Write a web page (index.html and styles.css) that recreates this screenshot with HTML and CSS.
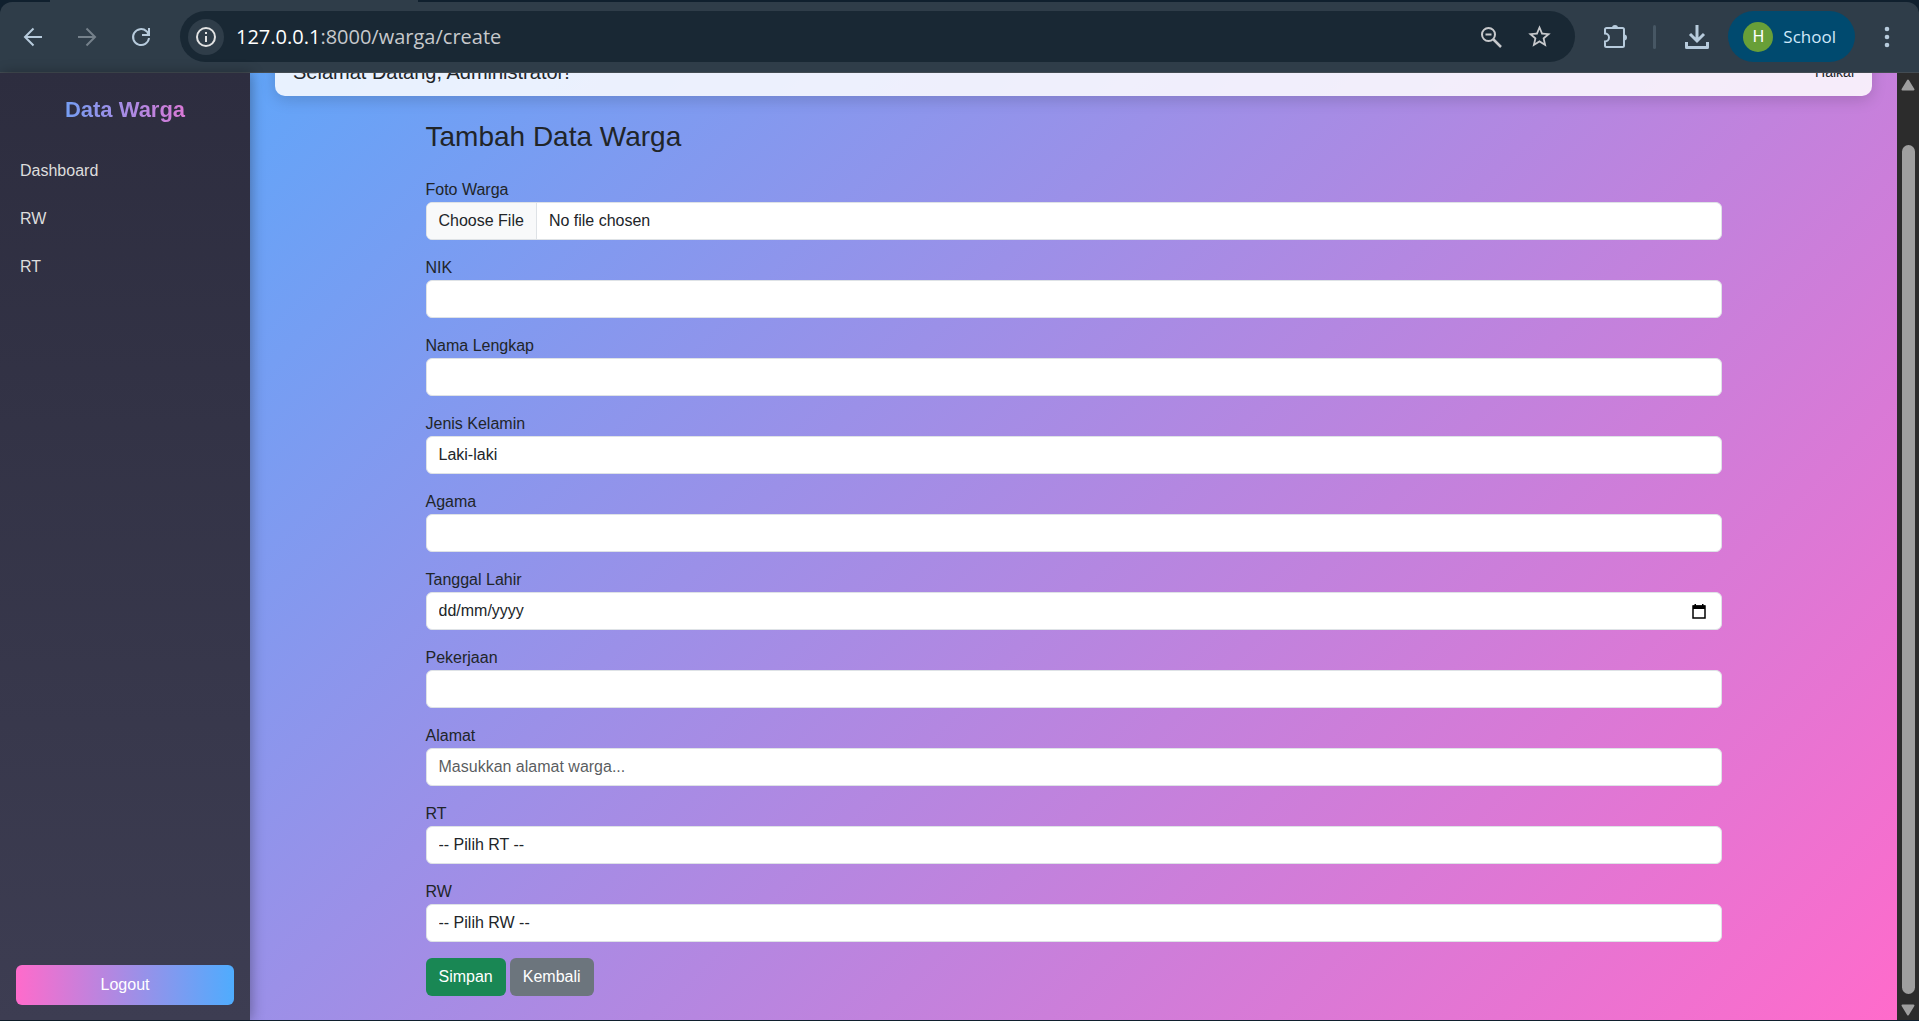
FILE: index.html
```html
<!DOCTYPE html>
<html lang="id">
<head>
<meta charset="utf-8">
<title>Tambah Data Warga</title>
<meta name="viewport" content="width=device-width, initial-scale=1">
<link rel="stylesheet" href="styles.css">
</head>
<body>
<header class="browser">
  <div class="toolbar">
    <div class="nav-buttons">
      <button class="icon-button" aria-label="Back"><svg width="24" height="24" viewBox="0 0 24 24"><path d="M21 12H4M12.500 3.500L4 12l8.500 8.500" fill="none" stroke="currentColor" stroke-width="2"/></svg></button>
      <button class="icon-button muted" aria-label="Forward" disabled><svg width="24" height="24" viewBox="0 0 24 24"><path d="M3 12h17M11.500 3.500L20 12l-8.500 8.500" fill="none" stroke="currentColor" stroke-width="2"/></svg></button>
      <button class="icon-button" aria-label="Reload"><svg width="24" height="24" viewBox="0 0 24 24"><path d="M20 13a8 8 0 1 1-2.500-6.800L20 9" fill="none" stroke="currentColor" stroke-width="2"/><path d="M21 3v8h-8v-2h4.500L19 7V3z" fill="currentColor"/></svg></button>
    </div>
    <div class="address">
      <button class="site-info" aria-label="Site information"><svg width="24" height="24" viewBox="0 0 24 24"><circle cx="12" cy="12" r="9" fill="none" stroke="currentColor" stroke-width="2"/><path d="M12 11v6M12 7v2" stroke="currentColor" stroke-width="2"/></svg></button>
      <span class="url"><span class="host">127.0.0.1</span>:8000/warga/create</span>
      <button class="icon-button light" aria-label="Zoom"><svg width="24" height="24" viewBox="0 0 24 24"><circle cx="9.500" cy="9.500" r="6.500" fill="none" stroke="currentColor" stroke-width="2"/><path d="M14 14l8 8" stroke="currentColor" stroke-width="2.500"/><path d="M6.500 9.500h6" stroke="currentColor" stroke-width="2"/></svg></button>
      <button class="icon-button light" aria-label="Bookmark"><svg width="27" height="27" viewBox="0 0 24 24" fill="currentColor"><path d="M22 9.240l-7.190-.62L12 2 9.190 8.630 2 9.240l5.460 4.730L5.820 21 12 17.270 18.180 21l-1.630-7.030L22 9.240zM12 15.400l-3.760 2.270 1-4.280-3.320-2.880 4.380-.38L12 6.100l1.710 4.040 4.380.38-3.320 2.880 1 4.280L12 15.400z"/></svg></button>
    </div>
    <div class="actions">
      <button class="icon-button" aria-label="Extensions"><svg width="28" height="28" viewBox="0 0 28 28"><path d="M4.500 5h16a1.500 1.500 0 0 1 1.500 1.500v16a1.500 1.500 0 0 1-1.500 1.500h-16A1.500 1.500 0 0 1 3 22.500v-4a4 4 0 0 0 0-8v-4A1.500 1.500 0 0 1 4.500 5z" fill="none" stroke="currentColor" stroke-width="2"/><path d="M10 5a3 3 0 0 1 6 0zM22 11.500a3 3 0 0 1 0 6z" fill="currentColor"/></svg></button>
      <span class="divider"></span>
      <button class="icon-button" aria-label="Downloads"><svg width="26" height="26" viewBox="0 0 26 26"><path d="M13 1v15M6 10l7 7 7-7" fill="none" stroke="currentColor" stroke-width="3"/><path d="M2.500 18v5.500h21V18" fill="none" stroke="currentColor" stroke-width="3" stroke-linejoin="round"/></svg></button>
      <button class="profile"><span class="avatar">H</span>School</button>
      <button class="icon-button" aria-label="Menu"><svg width="24" height="24" viewBox="0 0 24 24" fill="currentColor"><circle cx="12" cy="4" r="2.300"/><circle cx="12" cy="12" r="2.300"/><circle cx="12" cy="20" r="2.300"/></svg></button>
    </div>
  </div>
</header>

<div class="viewport">
  <div class="page">
    <aside class="sidebar">
      <h4 class="brand">Data Warga</h4>
      <nav class="menu">
        <a href="#">Dashboard</a>
        <a href="#">RW</a>
        <a href="#">RT</a>
      </nav>
      <button class="logout">Logout</button>
    </aside>
    <main class="content">
      <div class="welcome">
        <span class="greeting">Selamat Datang, Administrator!</span>
        <span class="user">Haikal</span>
      </div>
      <form class="container">
        <h3 class="title">Tambah Data Warga</h3>
        <div class="field"><label for="foto">Foto Warga</label><input class="control" type="file" id="foto"></div>
        <div class="field"><label for="nik">NIK</label><input class="control" type="text" id="nik"></div>
        <div class="field"><label for="nama">Nama Lengkap</label><input class="control" type="text" id="nama"></div>
        <div class="field"><label for="jk">Jenis Kelamin</label><select class="control" id="jk"><option>Laki-laki</option><option>Perempuan</option></select></div>
        <div class="field"><label for="agama">Agama</label><input class="control" type="text" id="agama"></div>
        <div class="field"><label for="lahir">Tanggal Lahir</label>
          <div class="control date"><input type="text" id="lahir" inputmode="numeric" placeholder="dd/mm/yyyy"><button type="button" class="picker" aria-label="Pilih tanggal"><svg width="14" height="15" viewBox="0 0 14 15"><path d="M1 2h12v12H1z" fill="none" stroke="#000" stroke-width="1.500"/><path d="M1 1.500h12V5H1zM2.500 0h1.500v2H2.500zM10 0h1.500v2H10z"/></svg></button></div>
        </div>
        <div class="field"><label for="kerja">Pekerjaan</label><input class="control" type="text" id="kerja"></div>
        <div class="field"><label for="alamat">Alamat</label><textarea class="control" id="alamat" rows="1" placeholder="Masukkan alamat warga..."></textarea></div>
        <div class="field"><label for="rt">RT</label><select class="control" id="rt"><option>-- Pilih RT --</option></select></div>
        <div class="field"><label for="rw">RW</label><select class="control" id="rw"><option>-- Pilih RW --</option></select></div>
        <div class="buttons"><button class="btn save" type="submit">Simpan</button><a class="btn back" href="#">Kembali</a></div>
      </form>
    </main>
  </div>
  <div class="scrollbar" aria-hidden="true">
    <svg width="14" height="12" viewBox="0 0 14 12"><path d="M7 1.500L12.500 10.500h-11z" fill="#9f9f9f" stroke="#9f9f9f" stroke-width="2" stroke-linejoin="round"/></svg>
    <div class="thumb"></div>
    <svg width="14" height="12" viewBox="0 0 14 12"><path d="M7 10.500L12.500 1.500h-11z" fill="#9f9f9f" stroke="#9f9f9f" stroke-width="2" stroke-linejoin="round"/></svg>
  </div>
</div>
</body>
</html>
```

FILE: styles.css
```css
* { box-sizing: border-box; }

body {
  margin: 0;
  height: 100vh;
  display: flex;
  flex-direction: column;
  overflow: hidden;
  font: 16px/24px "Liberation Sans", Arial, sans-serif;
  color: #212529;
  background: #10202e;
}

button { font: inherit; border: 0; cursor: pointer; }

/* Browser toolbar */
.browser {
  flex: none;
  padding-top: 2px;
  background: linear-gradient(#2f3d49, #2f3d49) 50px 0 / 368px 2px no-repeat #10202e;
}

.toolbar {
  height: 71px;
  display: flex;
  align-items: center;
  padding: 0 15px 1px 16px;
  background: #2f3d49;
  border-radius: 12px 12px 0 0;
  border-bottom: 1px solid #434c53;
}

.nav-buttons { display: flex; gap: 20px; margin-right: 22px; }

.icon-button {
  min-width: 34px;
  height: 34px;
  padding: 0;
  display: flex;
  align-items: center;
  justify-content: center;
  background: none;
  color: #b7cbdc;
}
.icon-button.muted { color: #75818b; }
.icon-button.light { color: #c7c9cc; }

.address {
  flex: 1;
  height: 51px;
  display: flex;
  align-items: center;
  gap: 14px;
  padding: 0 19px 0 8px;
  border-radius: 26px;
  background: #192834;
}

.site-info {
  width: 36px;
  height: 36px;
  padding: 0;
  display: flex;
  align-items: center;
  justify-content: center;
  border-radius: 50%;
  background: #2f3d49;
  color: #e3e3e3;
}

.url {
  flex: 1;
  margin-left: -2px;
  font: 20px/28px "Open Sans", "Noto Sans", sans-serif;
  color: #c7c9cc;
}
.host { color: #fff; }

.actions { display: flex; align-items: center; }
.actions > .icon-button:first-child { margin-left: 24px; }

.divider {
  width: 3px;
  height: 24px;
  margin: 0 24px 0 20px;
  border-radius: 2px;
  background: #475764;
}

.profile {
  height: 51px;
  margin: 0 15px 0 14px;
  padding: 0 19px 0 15px;
  display: flex;
  align-items: center;
  gap: 10px;
  border-radius: 26px;
  background: #004a6f;
  color: #cfe8fa;
  font: 17px/24px "Open Sans", "Noto Sans", sans-serif;
}

.avatar {
  width: 30px;
  height: 30px;
  border-radius: 50%;
  background: #689f38;
  color: #fff;
  font: 16px/30px Roboto, sans-serif;
}

/* Scrolled page area */
.viewport {
  flex: 1;
  min-height: 0;
  display: flex;
  margin-bottom: 1px;
}

.page {
  flex: 1;
  min-width: 0;
  display: flex;
  background: linear-gradient(135deg, #4facfe, #ff6bcb) 0 100% / 100% calc(100% + 64px);
}

.sidebar {
  z-index: 1;
  flex: none;
  width: 250px;
  display: flex;
  flex-direction: column;
  background: linear-gradient(#2d2d3f, #3d3d52);
  box-shadow: 2px 0 12px rgba(0, 0, 0, .3);
}

.brand {
  margin: 24px 20px;
  font-size: 22px;
  line-height: 26px;
  text-align: center;
  background: linear-gradient(90deg, #4facfe, #ff6bcb);
  -webkit-background-clip: text;
  background-clip: text;
  color: transparent;
}

.menu { flex: 1; }
.menu a {
  display: block;
  padding: 12px 20px;
  color: #ddd;
  text-decoration: none;
}

.logout {
  height: 40px;
  margin: 0 16px 15px;
  border-radius: 6px;
  color: #fff;
  background: linear-gradient(90deg, #ff6bcb, #4facfe);
}

.content {
  flex: 1;
  min-width: 0;
  padding: 0 25px 24px;
  display: flex;
  flex-direction: column;
  justify-content: flex-end;
  overflow: hidden;
}
.content > * { flex: none; }

.welcome {
  display: flex;
  align-items: center;
  justify-content: space-between;
  padding: 20px 18px 12px;
  margin-bottom: 24px;
  border-radius: 10px;
  background: rgba(255, 255, 255, .85);
  box-shadow: 0 4px 15px rgba(0, 0, 0, .15);
}
.greeting { font-size: 20px; }
.user { font-size: 14px; }

.container {
  width: 100%;
  max-width: 1296px;
  margin: 0 auto;
}

.title {
  margin: 0 0 24px;
  font-size: 28px;
  line-height: 34px;
  font-weight: 400;
}

.field { margin-bottom: 16px; }
.field label { display: block; width: fit-content; }

.control {
  appearance: none;
  display: block;
  width: 100%;
  height: 38px;
  padding: 6px 12px;
  border: 1px solid #dee2e6;
  border-radius: 6px;
  background: #fff;
  color: #212529;
  font: inherit;
  resize: none;
  overflow: hidden;
}
.control::placeholder { color: rgba(33, 37, 41, .75); }

.control::file-selector-button {
  margin: -6px 12px -6px -12px;
  padding: 6px 12px;
  border: 0 solid #dee2e6;
  border-right-width: 1px;
  background: #f8f9fa;
  color: #212529;
  font: inherit;
}

.control.date { display: flex; align-items: center; }
.date input {
  flex: 1;
  padding: 0;
  border: 0;
  background: none;
  font: inherit;
}
.date input::placeholder { color: #212529; }
.picker {
  display: flex;
  padding: 0 3px;
  background: none;
}

.buttons { display: flex; gap: 4px; }
.btn {
  height: 38px;
  padding: 7px 13px;
  border-radius: 6px;
  color: #fff;
  text-decoration: none;
}
.save { background: #198754; }
.back { background: #6c757d; }

/* Scrollbar */
.scrollbar {
  flex: none;
  width: 22px;
  display: flex;
  flex-direction: column;
  align-items: center;
  padding: 6px 0 4px;
  background: #2c2c2c;
}
.thumb {
  flex: 1;
  width: 13px;
  margin: 54px 0 10px;
  border-radius: 7px;
  background: #9f9f9f;
}
```
